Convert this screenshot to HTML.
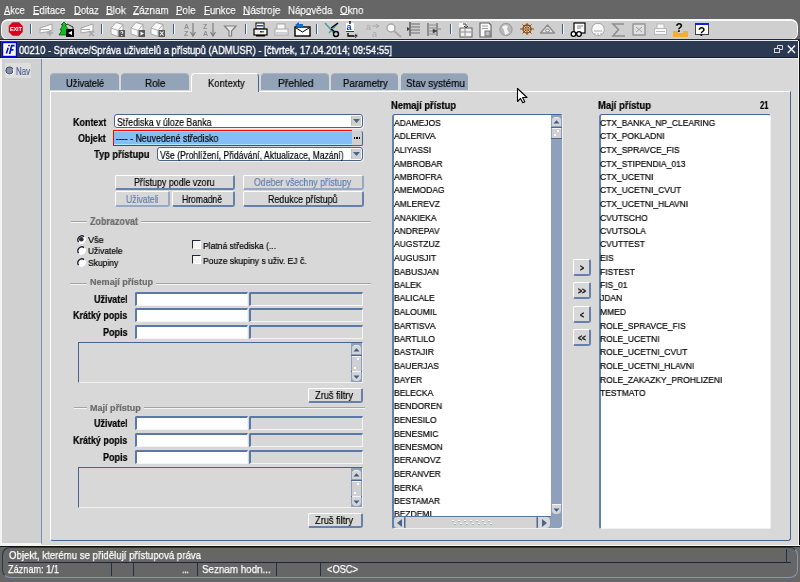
<!DOCTYPE html>
<html><head><meta charset="utf-8"><style>
html,body{margin:0;padding:0;}
body{width:800px;height:582px;overflow:hidden;position:relative;background:#666666;font-family:"Liberation Sans",sans-serif;}
.b{position:absolute;}
.t{position:absolute;white-space:pre;transform-origin:0 0;will-change:transform;-webkit-text-stroke:0.2px currentColor;}
</style></head><body>
<div class="t" style="left:4.00px;top:5px;font-size:11px;line-height:11px;color:#ffffff;transform:scaleX(0.8506);-webkit-text-stroke:0.25px #fff;text-shadow:0 0 1px #202020;">Akce</div>
<div class="b" style="left:4px;top:14px;width:6px;height:1px;background:#ffffff"></div>
<div class="t" style="left:33.00px;top:5px;font-size:11px;line-height:11px;color:#ffffff;transform:scaleX(0.8804);-webkit-text-stroke:0.25px #fff;text-shadow:0 0 1px #202020;">Editace</div>
<div class="b" style="left:33px;top:14px;width:6px;height:1px;background:#ffffff"></div>
<div class="t" style="left:74.00px;top:5px;font-size:11px;line-height:11px;color:#ffffff;transform:scaleX(0.8630);-webkit-text-stroke:0.25px #fff;text-shadow:0 0 1px #202020;">Dotaz</div>
<div class="b" style="left:74px;top:14px;width:7px;height:1px;background:#ffffff"></div>
<div class="t" style="left:106.00px;top:5px;font-size:11px;line-height:11px;color:#ffffff;transform:scaleX(0.9253);-webkit-text-stroke:0.25px #fff;text-shadow:0 0 1px #202020;">Blok</div>
<div class="b" style="left:106px;top:14px;width:7px;height:1px;background:#ffffff"></div>
<div class="t" style="left:133.00px;top:5px;font-size:11px;line-height:11px;color:#ffffff;transform:scaleX(0.9010);-webkit-text-stroke:0.25px #fff;text-shadow:0 0 1px #202020;">Záznam</div>
<div class="b" style="left:133px;top:14px;width:6px;height:1px;background:#ffffff"></div>
<div class="t" style="left:176.00px;top:5px;font-size:11px;line-height:11px;color:#ffffff;transform:scaleX(0.8857);-webkit-text-stroke:0.25px #fff;text-shadow:0 0 1px #202020;">Pole</div>
<div class="b" style="left:176px;top:14px;width:6px;height:1px;background:#ffffff"></div>
<div class="t" style="left:203.80px;top:5px;font-size:11px;line-height:11px;color:#ffffff;transform:scaleX(0.8760);-webkit-text-stroke:0.25px #fff;text-shadow:0 0 1px #202020;">Funkce</div>
<div class="b" style="left:204px;top:14px;width:6px;height:1px;background:#ffffff"></div>
<div class="t" style="left:243.00px;top:5px;font-size:11px;line-height:11px;color:#ffffff;transform:scaleX(0.9155);-webkit-text-stroke:0.25px #fff;text-shadow:0 0 1px #202020;">Nástroje</div>
<div class="b" style="left:243px;top:14px;width:7px;height:1px;background:#ffffff"></div>
<div class="t" style="left:288.40px;top:5px;font-size:11px;line-height:11px;color:#ffffff;transform:scaleX(0.8853);-webkit-text-stroke:0.25px #fff;text-shadow:0 0 1px #202020;">Nápověda</div>
<div class="b" style="left:306px;top:14px;width:5px;height:1px;background:#ffffff"></div>
<div class="t" style="left:340.30px;top:5px;font-size:11px;line-height:11px;color:#ffffff;transform:scaleX(0.8938);-webkit-text-stroke:0.25px #fff;text-shadow:0 0 1px #202020;">Okno</div>
<div class="b" style="left:340px;top:14px;width:8px;height:1px;background:#ffffff"></div>
<div class="b" style="left:1px;top:19px;width:797px;height:21px;background:#cfcfcf;border:1px solid #f8f8f8;border-top-width:2px;border-radius:7px;box-sizing:border-box"></div>
<div class="b" style="left:0px;top:39px;width:800px;height:2px;background:#1e2838"></div>
<svg class="b" style="left:0;top:0" width="800" height="40" viewBox="0 0 800 40"><polygon points="12.5,22 19,22 23,26 23,32 19,36 12.5,36 8.5,32 8.5,26" fill="#d8001a" stroke="#a0e0e0" stroke-width="0.5"/><text x="15.8" y="31.2" text-anchor="middle" font-family="Liberation Sans" font-size="5.6" font-weight="bold" fill="#fff" letter-spacing="-0.2">EXIT</text><rect x="30" y="24" width="1" height="10" fill="#3a5a90"/><rect x="31" y="24" width="1" height="10" fill="#fafafa"/><rect x="101" y="24" width="1" height="10" fill="#3a5a90"/><rect x="102" y="24" width="1" height="10" fill="#fafafa"/><rect x="173" y="24" width="1" height="10" fill="#3a5a90"/><rect x="174" y="24" width="1" height="10" fill="#fafafa"/><rect x="245" y="24" width="1" height="10" fill="#3a5a90"/><rect x="246" y="24" width="1" height="10" fill="#fafafa"/><rect x="316" y="24" width="1" height="10" fill="#3a5a90"/><rect x="317" y="24" width="1" height="10" fill="#fafafa"/><rect x="450" y="24" width="1" height="10" fill="#3a5a90"/><rect x="451" y="24" width="1" height="10" fill="#fafafa"/><rect x="562" y="24" width="1" height="10" fill="#3a5a90"/><rect x="563" y="24" width="1" height="10" fill="#fafafa"/><path d="M40 28 L52 24 L52 31 L40 33 Z" fill="#f8f8f8" stroke="#a8a8a8" stroke-width="1"/><path d="M40 29.5 H49" stroke="#a8a8a8" stroke-width="1"/><path d="M50 30 V36 M47 33 H53" stroke="#a8a8a8" stroke-width="1.5"/><path d="M81 28 L93 24 L93 31 L81 33 Z" fill="#f8f8f8" stroke="#a8a8a8" stroke-width="1"/><path d="M81 29.5 H90" stroke="#a8a8a8" stroke-width="1"/><path d="M89 31 L94 36 M94 31 L89 36" stroke="#a8a8a8" stroke-width="1.5"/><path d="M64 22 L67 25 L65 25 L69 30 L66 30 L70 35 L59 35 L62 30 L60 30 L63 25 L61 25 Z" fill="#10c020" stroke="#003000" stroke-width="0.6"/><rect x="66" y="29" width="8" height="8" fill="#000"/><path d="M68 33 L72 31 V35 Z" fill="#fff"/><path d="M67 24 L73 27 V29" stroke="#303030" stroke-width="1" fill="none"/><path d="M111 28 L116 22.5 L123 24.5 L123 31 L118 36.5 L111 34 Z" fill="#f8f8f8" stroke="#a8a8a8" stroke-width="1"/><path d="M111 28 L118 30.5 L123 24.5 M118 30.5 V36" stroke="#a8a8a8" stroke-width="0.9" fill="none"/><rect x="118.5" y="30" width="6.5" height="7" fill="#585858"/><path d="M120.5 32 Q121.8 30.8 123 32 Q122.5 33.3 121.8 34" stroke="#fff" stroke-width="1" fill="none"/><rect x="121.3" y="35" width="1" height="1" fill="#fff"/><path d="M131 28 L136 22.5 L143 24.5 L143 31 L138 36.5 L131 34 Z" fill="#f8f8f8" stroke="#a8a8a8" stroke-width="1"/><path d="M131 28 L138 30.5 L143 24.5 M138 30.5 V36" stroke="#a8a8a8" stroke-width="0.9" fill="none"/><rect x="138.5" y="30" width="6.5" height="7" fill="#585858"/><path d="M140.5 31.5 L144 33.5 L140.5 35.5 Z" fill="#fff"/><path d="M151 28 L156 22.5 L163 24.5 L163 31 L158 36.5 L151 34 Z" fill="#f8f8f8" stroke="#a8a8a8" stroke-width="1"/><path d="M151 28 L158 30.5 L163 24.5 M158 30.5 V36" stroke="#a8a8a8" stroke-width="0.9" fill="none"/><rect x="158.5" y="30" width="6.5" height="7" fill="#585858"/><path d="M160 31.5 L163.5 35.5 M163.5 31.5 L160 35.5" stroke="#fff" stroke-width="1.1"/><text x="184" y="28.5" font-family="Liberation Sans" font-size="7" font-weight="bold" fill="#909090">A</text><text x="184" y="36" font-family="Liberation Sans" font-size="7" font-weight="bold" fill="#909090">Z</text><path d="M193 23 V35 M190.5 32 L193 36 L195.5 32" stroke="#808080" stroke-width="1.2" fill="none"/><text x="203" y="28.5" font-family="Liberation Sans" font-size="7" font-weight="bold" fill="#909090">Z</text><text x="203" y="36" font-family="Liberation Sans" font-size="7" font-weight="bold" fill="#909090">A</text><path d="M213 23 V35 M210.5 32 L213 36 L215.5 32" stroke="#808080" stroke-width="1.2" fill="none"/><path d="M224.5 26 H236 L231.5 31 V36 H229 V31 Z" fill="#e8e8e8" stroke="#808080" stroke-width="1.2"/><rect x="256" y="23" width="8" height="6" fill="#fff" stroke="#000" stroke-width="1"/><rect x="257" y="25" width="6" height="1.5" fill="#2040c0"/><rect x="254" y="29" width="13" height="6" fill="#f0f0f0" stroke="#000" stroke-width="1.2"/><rect x="260" y="31" width="2" height="1.5" fill="#e00000"/><rect x="262" y="31" width="2" height="1.5" fill="#00c000"/><rect x="256" y="35" width="9" height="1.5" fill="#000"/><rect x="277" y="24" width="8" height="6" fill="#f8f8f8" stroke="#a8a8a8" stroke-width="1"/><rect x="275" y="29" width="13" height="6" fill="#f8f8f8" stroke="#a8a8a8" stroke-width="1"/><path d="M276 33 H287" stroke="#a8a8a8"/><rect x="295" y="27" width="15" height="9" fill="#fff" stroke="#000" stroke-width="1.4"/><path d="M296 28 L302.5 32 L309 28" stroke="#000" fill="none"/><path d="M295 25 L299 22 L299 24 H303 V27 H299 V28 Z" fill="#0070e0"/><path d="M325 23 L334 33 M338 23 L329 33" stroke="#50a0a0" stroke-width="1.6"/><path d="M331 28 L338 23" stroke="#000" stroke-width="1.4"/><circle cx="336" cy="34" r="2.5" fill="none" stroke="#000" stroke-width="1.4"/><circle cx="333" cy="27" r="0" /><path d="M331 29 L335 32" stroke="#000" stroke-width="1.3"/><rect x="346" y="23" width="8" height="8" fill="#fff"/><text x="346.5" y="30" font-family="Liberation Sans" font-size="9" font-weight="bold" fill="#1030e0">a</text><path d="M346 31.5 H354" stroke="#1030e0"/><path d="M350 21 V24 M348 33 V36 H356" stroke="#000" stroke-width="1.3" fill="none"/><path d="M355 34 L358 36 L355 38 Z" fill="#000"/><text x="354" y="37" font-family="Liberation Sans" font-size="8" fill="#b0b0b0">a</text><text x="366" y="30" font-family="Liberation Sans" font-size="9" fill="#a8a8a8">a</text><path d="M372 26 H379 M376 24 L379 26 L376 28" stroke="#a8a8a8" fill="none"/><text x="372" y="37" font-family="Liberation Sans" font-size="9" fill="#a8a8a8">a</text><circle cx="391" cy="28" r="4" fill="#f8f8f8" stroke="#a8a8a8" stroke-width="1.5"/><path d="M394 31 L401 37" stroke="#a8a8a8" stroke-width="2"/><path d="M410 22 V36" stroke="#404040" stroke-width="1.2"/><path d="M411 24 H420 M411 27 H420 M411 30 H420 M411 33 H420" stroke="#707070" stroke-width="1.1"/><path d="M407 27 L410 29 L407 31 Z" fill="#404040"/><path d="M428 23 V36 M437 23 V36" stroke="#505050" stroke-width="1"/><path d="M429 25 H436 M429 28 H436 M429 31 H436 M429 34 H436" stroke="#909090"/><path d="M433 29 L437 31 L433 33 Z M438 29 H441" fill="#404040" stroke="#404040" stroke-width="0.5"/><rect x="459" y="23" width="8" height="6" fill="#f4f4f4"/><rect x="460" y="28" width="12" height="9" fill="#f0f0f0" stroke="#606060" stroke-width="1"/><path d="M461 32 H471 M465 28 V36" stroke="#909090"/><path d="M463 24 H466 V27 M464 26 L466 28 L468 26" stroke="#404040" fill="none"/><path d="M480 23 H489 L491 25 V37 H480 Z" fill="#f8f8f8" stroke="#606060" stroke-width="1.1"/><path d="M482 26 H488 M482 28.5 H488" stroke="#a0a0a0"/><rect x="485" y="31" width="5" height="5" fill="#c0c0c0" stroke="#606060" stroke-width="0.8"/><circle cx="506" cy="29.5" r="6.2" fill="#b8b8b8" stroke="#909090" stroke-width="0.8"/><path d="M502 27 Q505 24 508 26 L507 29 L509 33 L505 35 L504 30 Z" fill="#f4f4f4"/><circle cx="527" cy="29" r="4" fill="none" stroke="#8a4a10" stroke-width="1.3"/><path d="M520 29 H534 M527 23 V35 M522.5 24.5 L531.5 33.5 M531.5 24.5 L522.5 33.5" stroke="#8a4a10" stroke-width="1"/><circle cx="527" cy="29" r="1.5" fill="#c08040"/><path d="M540.5 33 L547.5 25 L554.5 33 Z" fill="#e4e4e4" stroke="#8c8c8c" stroke-width="1.3" stroke-linejoin="round"/><ellipse cx="547.5" cy="30.5" rx="2" ry="1.5" fill="none" stroke="#8c8c8c"/><rect x="574" y="23" width="11" height="10" fill="#fff" stroke="#000" stroke-width="1.2"/><path d="M577 26 H583 M577 28 H581" stroke="#808080"/><circle cx="573.5" cy="34" r="2.3" fill="#fff" stroke="#000" stroke-width="1.3"/><circle cx="579" cy="34" r="2.3" fill="#fff" stroke="#000" stroke-width="1.3"/><circle cx="598" cy="29.5" r="6.3" fill="#f8f8f8" stroke="#a8a8a8" stroke-width="1"/><path d="M594 31 H602 M595 33 V35 M598 33 V35 M601 33 V35" stroke="#a8a8a8"/><path d="M624 24 H613 L618.5 29.5 L613 36 H625" fill="none" stroke="#909090" stroke-width="1.6"/><rect x="633" y="24" width="12" height="11" fill="#e0e0e0" stroke="#909090" stroke-width="1.3"/><path d="M636 27 L642 32 M642 27 L636 32" stroke="#a0a0a0"/><rect x="657" y="24" width="7" height="5" fill="#f8f8f8" stroke="#b8b8b8"/><rect x="654.5" y="28.5" width="12" height="6" fill="#f8f8f8" stroke="#b8b8b8"/><path d="M656 31.5 H665" stroke="#b8b8b8"/><rect x="673" y="31" width="5" height="6" fill="#f0b030"/><rect x="683" y="31" width="5" height="6" fill="#f0b030"/><rect x="678" y="33" width="5" height="4" fill="#f0b030"/><text x="675.5" y="32" font-family="Liberation Sans" font-size="12" font-weight="bold" fill="#000">?</text><rect x="695.5" y="23.5" width="13" height="11" fill="#fff" stroke="#404040" stroke-width="1"/><rect x="695" y="23" width="14" height="2" fill="#1020e0"/><text x="698" y="36" font-family="Liberation Sans" font-size="12" font-weight="bold" fill="#000">?</text></svg>
<div class="b" style="left:0px;top:41px;width:798px;height:17px;background:#2b3a52"></div>
<div class="b" style="left:0px;top:40px;width:798px;height:1px;background:#e8e8e8"></div>
<div class="b" style="left:0px;top:57px;width:798px;height:1px;background:#141c2a"></div>
<div class="b" style="left:0px;top:41px;width:1px;height:17px;background:#141c2a"></div>
<div class="b" style="left:0px;top:58px;width:800px;height:1px;background:#f0f0f0"></div>
<svg class="b" style="left:2px;top:42px" width="15" height="15" viewBox="0 0 15 15"><rect x="0.6" y="0.6" width="13.8" height="13.8" fill="#fbfbf0" stroke="#0000f0" stroke-width="1.2"/><circle cx="7" cy="3.6" r="0.9" fill="#0010d0"/><path d="M6.2 5.8 L4.4 11.5" stroke="#0010d0" stroke-width="1.6"/><path d="M7.6 12 L9.7 3.6 H12.6 M8.4 7.8 H11.5" stroke="#0010d0" stroke-width="1.7" fill="none"/></svg>
<div class="t" style="left:19.00px;top:45px;font-size:11px;line-height:11px;color:#ffffff;transform:scaleX(0.8604);-webkit-text-stroke:0.35px #fff;">00210 - Správce/Správa uživatelů a přístupů (ADMUSR) - [čtvrtek, 17.04.2014; 09:54:55]</div>
<svg class="b" style="left:0;top:0" width="800" height="60" viewBox="0 0 800 60"><path d="M777.5 48 V45.5 H782.5 V49.5 H779.5" fill="none" stroke="#d8d8d8" stroke-width="1"/><rect x="774.5" y="48.5" width="5" height="4" fill="none" stroke="#d8d8d8" stroke-width="1"/><path d="M787.8 45.5 L795 53 M795 45.5 L787.8 53" stroke="#f4f4f4" stroke-width="1.5"/></svg>
<div class="b" style="left:0px;top:59px;width:800px;height:487px;background:#d8d8d8"></div>
<div class="b" style="left:0px;top:59px;width:2px;height:487px;background:#f4f4f4"></div>
<div class="b" style="left:798px;top:41px;width:1px;height:505px;background:#f0f0f0"></div>
<div class="b" style="left:799px;top:41px;width:1px;height:505px;background:#101010"></div>
<div class="b" style="left:2px;top:59px;width:40px;height:486px;background:#d0d0d0;border-right:1px solid #7890b0;border-bottom:2px solid #f4f4f4;box-sizing:border-box"></div>
<div class="b" style="left:5px;top:63px;width:26px;height:15px;background:#dedede"></div>
<svg class="b" style="left:5px;top:66px" width="9" height="9" viewBox="0 0 9 9"><circle cx="4.5" cy="4.5" r="3.6" fill="#8090a8" stroke="#404a60" stroke-width="1"/><path d="M1.5 7.5 A3.8 3.8 0 0 0 8 3" stroke="#fff" fill="none" stroke-width="1"/></svg>
<div class="t" style="left:16.00px;top:66px;font-size:11px;line-height:11px;color:#4a6090;transform:scaleX(0.7157);">Nav</div>
<div class="b" style="left:0px;top:545px;width:800px;height:1px;background:#f4f4f4"></div>
<div class="b" style="left:0px;top:546px;width:800px;height:1px;background:#101010"></div>
<div class="b" style="left:50px;top:91px;width:741px;height:450px;background:#d8d8d8;border-left:1px solid #ffffff;border-top:1px solid #ffffff;border-right:1px solid #4a6490;border-bottom:1px solid #4a6490;border-radius:0 0 3px 3px;box-sizing:border-box"></div>
<div class="b" style="left:50px;top:73px;width:69px;height:17px;background:#94a4b8;border-radius:4px 4px 0 0;border-top:1px solid #a8b4c4;box-sizing:border-box"></div>
<div class="t" style="left:65.60px;top:78px;font-size:11px;line-height:11px;color:#000;transform:scaleX(0.8444);">Uživatelé</div>
<div class="b" style="left:121px;top:73px;width:68px;height:17px;background:#94a4b8;border-radius:4px 4px 0 0;border-top:1px solid #a8b4c4;box-sizing:border-box"></div>
<div class="t" style="left:145.40px;top:78px;font-size:11px;line-height:11px;color:#000;transform:scaleX(0.9017);">Role</div>
<div class="b" style="left:191px;top:73px;width:68px;height:19px;background:#d8d8d8;border-left:1px solid #fff;border-top:1px solid #fff;border-right:1px solid #4a6490;border-radius:4px 4px 0 0;box-sizing:border-box"></div>
<div class="t" style="left:208.00px;top:78px;font-size:11px;line-height:11px;color:#000;transform:scaleX(0.8598);">Kontexty</div>
<div class="b" style="left:261px;top:73px;width:68px;height:17px;background:#94a4b8;border-radius:4px 4px 0 0;border-top:1px solid #a8b4c4;box-sizing:border-box"></div>
<div class="t" style="left:278.00px;top:78px;font-size:11px;line-height:11px;color:#000;transform:scaleX(0.9363);">Přehled</div>
<div class="b" style="left:331px;top:73px;width:67px;height:17px;background:#94a4b8;border-radius:4px 4px 0 0;border-top:1px solid #a8b4c4;box-sizing:border-box"></div>
<div class="t" style="left:343.00px;top:78px;font-size:11px;line-height:11px;color:#000;transform:scaleX(0.8830);">Parametry</div>
<div class="b" style="left:401px;top:73px;width:67px;height:17px;background:#94a4b8;border-radius:4px 4px 0 0;border-top:1px solid #a8b4c4;box-sizing:border-box"></div>
<div class="t" style="left:406.00px;top:78px;font-size:11px;line-height:11px;color:#000;transform:scaleX(0.8906);">Stav systému</div>
<div class="t" style="left:72.75px;top:117px;font-size:11px;line-height:11px;font-weight:bold;color:#000;transform:scaleX(0.8121);">Kontext</div>
<div class="b" style="left:114px;top:114px;width:249px;height:14px;background:#fff;border:1px solid #4a6490;border-radius:3px;box-shadow:1px 1px 0 #f0f0f0;box-sizing:border-box"></div>
<div class="b" style="left:351px;top:116px;width:10px;height:10px;background:#d0d0d0;border-left:1px solid #c0c0c0;box-sizing:border-box"></div>
<svg class="b" style="left:353px;top:119px" width="7" height="4" viewBox="0 0 7 4"><path d="M0 0H7L3.5 4Z" fill="#4a6490"/></svg>
<div class="t" style="left:117.00px;top:117px;font-size:11px;line-height:11px;color:#000;transform:scaleX(0.8000);">Střediska v úloze Banka</div>
<div class="t" style="left:78.27px;top:133px;font-size:11px;line-height:11px;font-weight:bold;color:#000;transform:scaleX(0.8100);">Objekt</div>
<div class="b" style="left:113px;top:130px;width:239px;height:16px;background:#84bef6;border-top:1px solid #ff0000;border-bottom:1px solid #ff0000;border-left:1px solid #ff0000;box-shadow:inset 0 1px 0 #b0e4ff, inset 0 -1px 0 #b0e4ff;box-sizing:border-box"></div>
<div class="b" style="left:352px;top:131px;width:11px;height:15px;background:#d0d0d0;border-right:1px solid #4a6490;border-bottom:1px solid #4a6490;border-radius:0 2px 2px 0;box-sizing:border-box"></div>
<div class="b" style="left:354px;top:137px;width:1px;height:2px;background:#000"></div>
<div class="b" style="left:356px;top:137px;width:2px;height:2px;background:#000"></div>
<div class="b" style="left:359px;top:137px;width:1px;height:2px;background:#000"></div>
<div class="t" style="left:116.00px;top:133px;font-size:11px;line-height:11px;color:#000;transform:scaleX(0.8000);">---- - Neuvedené středisko</div>
<div class="t" style="left:94.00px;top:149px;font-size:11px;line-height:11px;font-weight:bold;color:#000;transform:scaleX(0.8436);">Typ přístupu</div>
<div class="b" style="left:157px;top:147px;width:206px;height:14px;background:#fff;border:1px solid #4a6490;border-radius:3px;box-shadow:1px 1px 0 #f0f0f0;box-sizing:border-box"></div>
<div class="b" style="left:351px;top:149px;width:10px;height:10px;background:#d0d0d0;border-left:1px solid #c0c0c0;box-sizing:border-box"></div>
<svg class="b" style="left:353px;top:152px" width="7" height="4" viewBox="0 0 7 4"><path d="M0 0H7L3.5 4Z" fill="#4a6490"/></svg>
<div class="t" style="left:160.00px;top:150px;font-size:11px;line-height:11px;color:#000;transform:scaleX(0.7800);">Vše (Prohlížení, Přidávání, Aktualizace, Mazání)</div>
<div class="b" style="left:115px;top:175px;width:120px;height:15px;background:#d8d8d8;border-top:1px solid #ffffff;border-left:1px solid #ffffff;border-right:2px solid #6680aa;border-bottom:2px solid #6680aa;border-radius:2px 2px 3px 2px;box-sizing:border-box"></div>
<div class="t" style="left:133.75px;top:177px;font-size:11px;line-height:11px;color:#000;transform:scaleX(0.8028);">Přístupy podle vzoru</div>
<div class="b" style="left:243px;top:175px;width:121px;height:15px;background:#d8d8d8;border-top:1px solid #ffffff;border-left:1px solid #ffffff;border-right:2px solid #98a8c4;border-bottom:2px solid #98a8c4;border-radius:2px 2px 3px 2px;box-sizing:border-box"></div>
<div class="t" style="left:253.90px;top:177px;font-size:11px;line-height:11px;color:#6080b0;transform:scaleX(0.7949);">Odeber všechny přístupy</div>
<div class="b" style="left:115px;top:191px;width:55px;height:16px;background:#d8d8d8;border-top:1px solid #ffffff;border-left:1px solid #ffffff;border-right:2px solid #98a8c4;border-bottom:2px solid #98a8c4;border-radius:2px 2px 3px 2px;box-sizing:border-box"></div>
<div class="t" style="left:125.75px;top:194px;font-size:11px;line-height:11px;color:#6080b0;transform:scaleX(0.7819);">Uživateli</div>
<div class="b" style="left:172px;top:191px;width:63px;height:16px;background:#d8d8d8;border-top:1px solid #ffffff;border-left:1px solid #ffffff;border-right:2px solid #6680aa;border-bottom:2px solid #6680aa;border-radius:2px 2px 3px 2px;box-sizing:border-box"></div>
<div class="t" style="left:182.00px;top:194px;font-size:11px;line-height:11px;color:#000;transform:scaleX(0.7788);">Hromadně</div>
<div class="b" style="left:243px;top:191px;width:121px;height:16px;background:#d8d8d8;border-top:1px solid #ffffff;border-left:1px solid #ffffff;border-right:2px solid #6680aa;border-bottom:2px solid #6680aa;border-radius:2px 2px 3px 2px;box-sizing:border-box"></div>
<div class="t" style="left:267.75px;top:194px;font-size:11px;line-height:11px;color:#000;transform:scaleX(0.8061);">Redukce přístupů</div>
<div class="b" style="left:71px;top:221px;width:16.400000000000006px;height:1px;background:#a4a4a4"></div>
<div class="b" style="left:141.3px;top:221px;width:229.7px;height:1px;background:#a4a4a4"></div>
<div class="b" style="left:71px;top:222px;width:16.400000000000006px;height:1px;background:#f4f4f4"></div>
<div class="b" style="left:141.3px;top:222px;width:229.7px;height:1px;background:#f4f4f4"></div>
<div class="t" style="left:90.40px;top:217px;font-size:10px;line-height:10px;font-weight:bold;color:#6c6c6c;transform:scaleX(0.8980);">Zobrazovat</div>
<svg class="b" style="left:76px;top:234px" width="11" height="11" viewBox="0 0 11 11"><circle cx="5.5" cy="5.5" r="4" fill="#fafafa"/><path d="M2.7 8.3A4 4 0 0 1 8.3 2.7" stroke="#1c2230" stroke-width="1.3" fill="none"/><path d="M8.3 2.7A4 4 0 0 1 2.7 8.3" stroke="#ffffff" stroke-width="1.2" fill="none"/><circle cx="5.3" cy="5.3" r="2.3" fill="#283040"/></svg>
<div class="t" style="left:88.00px;top:235px;font-size:9.5px;line-height:9.5px;color:#000;transform:scaleX(0.9591);">Vše</div>
<svg class="b" style="left:76px;top:245px" width="11" height="11" viewBox="0 0 11 11"><circle cx="5.5" cy="5.5" r="4" fill="#fafafa"/><path d="M2.7 8.3A4 4 0 0 1 8.3 2.7" stroke="#1c2230" stroke-width="1.3" fill="none"/><path d="M8.3 2.7A4 4 0 0 1 2.7 8.3" stroke="#ffffff" stroke-width="1.2" fill="none"/></svg>
<div class="t" style="left:88.00px;top:246px;font-size:9.5px;line-height:9.5px;color:#000;transform:scaleX(0.8830);">Uživatele</div>
<svg class="b" style="left:76px;top:257px" width="11" height="11" viewBox="0 0 11 11"><circle cx="5.5" cy="5.5" r="4" fill="#fafafa"/><path d="M2.7 8.3A4 4 0 0 1 8.3 2.7" stroke="#1c2230" stroke-width="1.3" fill="none"/><path d="M8.3 2.7A4 4 0 0 1 2.7 8.3" stroke="#ffffff" stroke-width="1.2" fill="none"/></svg>
<div class="t" style="left:88.00px;top:258px;font-size:9.5px;line-height:9.5px;color:#000;transform:scaleX(0.8965);">Skupiny</div>
<div class="b" style="left:192px;top:240px;width:9px;height:9px;background:#f4f4f4;border-top:1px solid #202838;border-left:1px solid #202838;border-right:1px solid #ffffff;border-bottom:1px solid #ffffff;box-sizing:border-box"></div>
<div class="t" style="left:203.00px;top:241px;font-size:9.5px;line-height:9.5px;color:#000;transform:scaleX(0.8978);">Platná střediska (...</div>
<div class="b" style="left:192px;top:255px;width:9px;height:9px;background:#f4f4f4;border-top:1px solid #202838;border-left:1px solid #202838;border-right:1px solid #ffffff;border-bottom:1px solid #ffffff;box-sizing:border-box"></div>
<div class="t" style="left:203.00px;top:256px;font-size:9.5px;line-height:9.5px;color:#000;transform:scaleX(0.9065);">Pouze skupiny s uživ. EJ č.</div>
<div class="b" style="left:70px;top:283px;width:17.400000000000006px;height:1px;background:#a4a4a4"></div>
<div class="b" style="left:156.4px;top:283px;width:214.6px;height:1px;background:#a4a4a4"></div>
<div class="b" style="left:70px;top:284px;width:17.400000000000006px;height:1px;background:#f4f4f4"></div>
<div class="b" style="left:156.4px;top:284px;width:214.6px;height:1px;background:#f4f4f4"></div>
<div class="t" style="left:90.40px;top:278px;font-size:9px;line-height:9px;font-weight:bold;color:#6c6c6c;transform:scaleX(1.0078);">Nemají přístup</div>
<div class="t" style="left:93.90px;top:294px;font-size:11px;line-height:11px;font-weight:bold;color:#000;transform:scaleX(0.8082);">Uživatel</div>
<div class="b" style="left:135px;top:292px;width:113px;height:14px;background:#ffffff;border-top:2px solid #5a78a8;border-left:2px solid #5a78a8;border-radius:2px 0 0 0;border-right:1px solid #f4f4f4;border-bottom:1px solid #f4f4f4;box-sizing:border-box"></div>
<div class="b" style="left:249px;top:292px;width:114px;height:14px;background:#d8d8d8;border-top:2px solid #5a78a8;border-left:2px solid #5a78a8;border-radius:2px 0 0 0;border-right:1px solid #f4f4f4;border-bottom:1px solid #f4f4f4;box-sizing:border-box"></div>
<div class="t" style="left:73.30px;top:310px;font-size:11px;line-height:11px;font-weight:bold;color:#000;transform:scaleX(0.8135);">Krátký popis</div>
<div class="b" style="left:135px;top:308px;width:113px;height:14px;background:#ffffff;border-top:2px solid #5a78a8;border-left:2px solid #5a78a8;border-radius:2px 0 0 0;border-right:1px solid #f4f4f4;border-bottom:1px solid #f4f4f4;box-sizing:border-box"></div>
<div class="b" style="left:249px;top:308px;width:114px;height:14px;background:#d8d8d8;border-top:2px solid #5a78a8;border-left:2px solid #5a78a8;border-radius:2px 0 0 0;border-right:1px solid #f4f4f4;border-bottom:1px solid #f4f4f4;box-sizing:border-box"></div>
<div class="t" style="left:102.90px;top:327px;font-size:11px;line-height:11px;font-weight:bold;color:#000;transform:scaleX(0.8214);">Popis</div>
<div class="b" style="left:135px;top:325px;width:113px;height:14px;background:#ffffff;border-top:2px solid #5a78a8;border-left:2px solid #5a78a8;border-radius:2px 0 0 0;border-right:1px solid #f4f4f4;border-bottom:1px solid #f4f4f4;box-sizing:border-box"></div>
<div class="b" style="left:249px;top:325px;width:114px;height:14px;background:#d8d8d8;border-top:2px solid #5a78a8;border-left:2px solid #5a78a8;border-radius:2px 0 0 0;border-right:1px solid #f4f4f4;border-bottom:1px solid #f4f4f4;box-sizing:border-box"></div>
<div class="b" style="left:78px;top:342px;width:285px;height:41px;background:#d8d8d8;border-top:1px solid #4a6490;border-left:1px solid #4a6490;border-right:1px solid #f0f0f0;border-bottom:1px solid #f0f0f0;box-sizing:border-box"></div>
<div class="b" style="left:351px;top:343px;width:11px;height:39px;background:#8fa0bc"></div>
<div class="b" style="left:352px;top:345px;width:9px;height:9px;background:#d4d4d4;border-radius:4px 4px 0 0;border-top:1px solid #eeeeee;box-sizing:border-box"></div>
<svg class="b" style="left:353px;top:348px" width="7" height="4" viewBox="0 0 7 4"><path d="M0.5 3.5H6.5L3.5 0.3Z" fill="#3c5a8c"/></svg>
<div class="b" style="left:351px;top:355px;width:11px;height:1px;background:#4a6898"></div>
<div class="b" style="left:352px;top:356px;width:9px;height:1px;background:#f4f4f4"></div>
<div class="b" style="left:352px;top:357px;width:9px;height:14px;background:#d0d0d0"></div>
<div class="b" style="left:357px;top:358px;width:2px;height:2px;background:#ffffff"></div>
<div class="b" style="left:354px;top:367px;width:2px;height:2px;background:#ffffff"></div>
<div class="b" style="left:351px;top:371px;width:11px;height:1px;background:#4a6898"></div>
<div class="b" style="left:352px;top:371px;width:9px;height:10px;background:#d4d4d4;border-radius:0 0 4px 4px;border-top:1px solid #f4f4f4;box-sizing:border-box"></div>
<svg class="b" style="left:353px;top:375px" width="7" height="4" viewBox="0 0 7 4"><path d="M0.5 0.5H6.5L3.5 3.7Z" fill="#3c5a8c"/></svg>
<div class="b" style="left:308px;top:388px;width:55px;height:15px;background:#d8d8d8;border-top:1px solid #ffffff;border-left:1px solid #ffffff;border-right:2px solid #6680aa;border-bottom:2px solid #6680aa;border-radius:2px 2px 3px 2px;box-sizing:border-box"></div>
<div class="t" style="left:315.00px;top:390px;font-size:11px;line-height:11px;color:#000;transform:scaleX(0.8404);">Zruš filtry</div>
<div class="b" style="left:74px;top:407px;width:13.200000000000003px;height:1px;background:#a4a4a4"></div>
<div class="b" style="left:144px;top:407px;width:221px;height:1px;background:#a4a4a4"></div>
<div class="b" style="left:74px;top:408px;width:13.200000000000003px;height:1px;background:#f4f4f4"></div>
<div class="b" style="left:144px;top:408px;width:221px;height:1px;background:#f4f4f4"></div>
<div class="t" style="left:90.20px;top:404px;font-size:9px;line-height:9px;font-weight:bold;color:#6c6c6c;transform:scaleX(1.0059);">Mají přístup</div>
<div class="t" style="left:93.90px;top:418px;font-size:11px;line-height:11px;font-weight:bold;color:#000;transform:scaleX(0.8082);">Uživatel</div>
<div class="b" style="left:135px;top:416px;width:113px;height:14px;background:#ffffff;border-top:2px solid #5a78a8;border-left:2px solid #5a78a8;border-radius:2px 0 0 0;border-right:1px solid #f4f4f4;border-bottom:1px solid #f4f4f4;box-sizing:border-box"></div>
<div class="b" style="left:249px;top:416px;width:114px;height:14px;background:#d8d8d8;border-top:2px solid #5a78a8;border-left:2px solid #5a78a8;border-radius:2px 0 0 0;border-right:1px solid #f4f4f4;border-bottom:1px solid #f4f4f4;box-sizing:border-box"></div>
<div class="t" style="left:73.30px;top:435px;font-size:11px;line-height:11px;font-weight:bold;color:#000;transform:scaleX(0.8135);">Krátký popis</div>
<div class="b" style="left:135px;top:433px;width:113px;height:14px;background:#ffffff;border-top:2px solid #5a78a8;border-left:2px solid #5a78a8;border-radius:2px 0 0 0;border-right:1px solid #f4f4f4;border-bottom:1px solid #f4f4f4;box-sizing:border-box"></div>
<div class="b" style="left:249px;top:433px;width:114px;height:14px;background:#d8d8d8;border-top:2px solid #5a78a8;border-left:2px solid #5a78a8;border-radius:2px 0 0 0;border-right:1px solid #f4f4f4;border-bottom:1px solid #f4f4f4;box-sizing:border-box"></div>
<div class="t" style="left:102.90px;top:452px;font-size:11px;line-height:11px;font-weight:bold;color:#000;transform:scaleX(0.8214);">Popis</div>
<div class="b" style="left:135px;top:450px;width:113px;height:14px;background:#ffffff;border-top:2px solid #5a78a8;border-left:2px solid #5a78a8;border-radius:2px 0 0 0;border-right:1px solid #f4f4f4;border-bottom:1px solid #f4f4f4;box-sizing:border-box"></div>
<div class="b" style="left:249px;top:450px;width:114px;height:14px;background:#d8d8d8;border-top:2px solid #5a78a8;border-left:2px solid #5a78a8;border-radius:2px 0 0 0;border-right:1px solid #f4f4f4;border-bottom:1px solid #f4f4f4;box-sizing:border-box"></div>
<div class="b" style="left:78px;top:467px;width:285px;height:41px;background:#d8d8d8;border-top:1px solid #4a6490;border-left:1px solid #4a6490;border-right:1px solid #f0f0f0;border-bottom:1px solid #f0f0f0;box-sizing:border-box"></div>
<div class="b" style="left:351px;top:468px;width:11px;height:39px;background:#8fa0bc"></div>
<div class="b" style="left:352px;top:470px;width:9px;height:9px;background:#d4d4d4;border-radius:4px 4px 0 0;border-top:1px solid #eeeeee;box-sizing:border-box"></div>
<svg class="b" style="left:353px;top:473px" width="7" height="4" viewBox="0 0 7 4"><path d="M0.5 3.5H6.5L3.5 0.3Z" fill="#3c5a8c"/></svg>
<div class="b" style="left:351px;top:480px;width:11px;height:1px;background:#4a6898"></div>
<div class="b" style="left:352px;top:481px;width:9px;height:1px;background:#f4f4f4"></div>
<div class="b" style="left:352px;top:482px;width:9px;height:14px;background:#d0d0d0"></div>
<div class="b" style="left:357px;top:483px;width:2px;height:2px;background:#ffffff"></div>
<div class="b" style="left:354px;top:492px;width:2px;height:2px;background:#ffffff"></div>
<div class="b" style="left:351px;top:496px;width:11px;height:1px;background:#4a6898"></div>
<div class="b" style="left:352px;top:496px;width:9px;height:10px;background:#d4d4d4;border-radius:0 0 4px 4px;border-top:1px solid #f4f4f4;box-sizing:border-box"></div>
<svg class="b" style="left:353px;top:500px" width="7" height="4" viewBox="0 0 7 4"><path d="M0.5 0.5H6.5L3.5 3.7Z" fill="#3c5a8c"/></svg>
<div class="b" style="left:308px;top:513px;width:55px;height:15px;background:#d8d8d8;border-top:1px solid #ffffff;border-left:1px solid #ffffff;border-right:2px solid #6680aa;border-bottom:2px solid #6680aa;border-radius:2px 2px 3px 2px;box-sizing:border-box"></div>
<div class="t" style="left:315.00px;top:515px;font-size:11px;line-height:11px;color:#000;transform:scaleX(0.8404);">Zruš filtry</div>
<div class="t" style="left:391.00px;top:100px;font-size:11px;line-height:11px;font-weight:bold;color:#000;transform:scaleX(0.8507);">Nemají přístup</div>
<div class="t" style="left:598.00px;top:100px;font-size:11px;line-height:11px;font-weight:bold;color:#000;transform:scaleX(0.8587);">Mají přístup</div>
<div class="t" style="left:760.00px;top:100px;font-size:11px;line-height:11px;font-weight:bold;color:#000;transform:scaleX(0.6947);">21</div>
<div class="b" style="left:392px;top:114px;width:171px;height:415px;background:#ffffff;border-top:1px solid #48669a;border-left:2px solid #6482ae;border-right:1px solid #f0f0f0;border-bottom:1px solid #f0f0f0;border-radius:3px 3px 2px 2px;box-sizing:border-box"></div>
<div class="b" style="left:394px;top:116px;width:157px;height:400px;overflow:hidden">
<div class="t" style="left:0px;top:3px;font-size:9px;line-height:9px;color:#000;transform:scaleX(0.945)">ADAMEJOS</div>
<div class="t" style="left:0px;top:16px;font-size:9px;line-height:9px;color:#000;transform:scaleX(0.945)">ADLERIVA</div>
<div class="t" style="left:0px;top:30px;font-size:9px;line-height:9px;color:#000;transform:scaleX(0.945)">ALIYASSI</div>
<div class="t" style="left:0px;top:44px;font-size:9px;line-height:9px;color:#000;transform:scaleX(0.945)">AMBROBAR</div>
<div class="t" style="left:0px;top:57px;font-size:9px;line-height:9px;color:#000;transform:scaleX(0.945)">AMBROFRA</div>
<div class="t" style="left:0px;top:70px;font-size:9px;line-height:9px;color:#000;transform:scaleX(0.945)">AMEMODAG</div>
<div class="t" style="left:0px;top:84px;font-size:9px;line-height:9px;color:#000;transform:scaleX(0.945)">AMLEREVZ</div>
<div class="t" style="left:0px;top:98px;font-size:9px;line-height:9px;color:#000;transform:scaleX(0.945)">ANAKIEKA</div>
<div class="t" style="left:0px;top:111px;font-size:9px;line-height:9px;color:#000;transform:scaleX(0.945)">ANDREPAV</div>
<div class="t" style="left:0px;top:124px;font-size:9px;line-height:9px;color:#000;transform:scaleX(0.945)">AUGSTZUZ</div>
<div class="t" style="left:0px;top:138px;font-size:9px;line-height:9px;color:#000;transform:scaleX(0.945)">AUGUSJIT</div>
<div class="t" style="left:0px;top:152px;font-size:9px;line-height:9px;color:#000;transform:scaleX(0.945)">BABUSJAN</div>
<div class="t" style="left:0px;top:165px;font-size:9px;line-height:9px;color:#000;transform:scaleX(0.945)">BALEK</div>
<div class="t" style="left:0px;top:178px;font-size:9px;line-height:9px;color:#000;transform:scaleX(0.945)">BALICALE</div>
<div class="t" style="left:0px;top:192px;font-size:9px;line-height:9px;color:#000;transform:scaleX(0.945)">BALOUMIL</div>
<div class="t" style="left:0px;top:206px;font-size:9px;line-height:9px;color:#000;transform:scaleX(0.945)">BARTISVA</div>
<div class="t" style="left:0px;top:219px;font-size:9px;line-height:9px;color:#000;transform:scaleX(0.945)">BARTLILO</div>
<div class="t" style="left:0px;top:232px;font-size:9px;line-height:9px;color:#000;transform:scaleX(0.945)">BASTAJIR</div>
<div class="t" style="left:0px;top:246px;font-size:9px;line-height:9px;color:#000;transform:scaleX(0.945)">BAUERJAS</div>
<div class="t" style="left:0px;top:260px;font-size:9px;line-height:9px;color:#000;transform:scaleX(0.945)">BAYER</div>
<div class="t" style="left:0px;top:273px;font-size:9px;line-height:9px;color:#000;transform:scaleX(0.945)">BELECKA</div>
<div class="t" style="left:0px;top:286px;font-size:9px;line-height:9px;color:#000;transform:scaleX(0.945)">BENDOREN</div>
<div class="t" style="left:0px;top:300px;font-size:9px;line-height:9px;color:#000;transform:scaleX(0.945)">BENESILO</div>
<div class="t" style="left:0px;top:314px;font-size:9px;line-height:9px;color:#000;transform:scaleX(0.945)">BENESMIC</div>
<div class="t" style="left:0px;top:327px;font-size:9px;line-height:9px;color:#000;transform:scaleX(0.945)">BENESMON</div>
<div class="t" style="left:0px;top:340px;font-size:9px;line-height:9px;color:#000;transform:scaleX(0.945)">BERANOVZ</div>
<div class="t" style="left:0px;top:354px;font-size:9px;line-height:9px;color:#000;transform:scaleX(0.945)">BERANVER</div>
<div class="t" style="left:0px;top:368px;font-size:9px;line-height:9px;color:#000;transform:scaleX(0.945)">BERKA</div>
<div class="t" style="left:0px;top:381px;font-size:9px;line-height:9px;color:#000;transform:scaleX(0.945)">BESTAMAR</div>
<div class="t" style="left:0px;top:394px;font-size:9px;line-height:9px;color:#000;transform:scaleX(0.945)">BEZDEMI</div>
</div>
<div class="b" style="left:551px;top:115px;width:11px;height:402px;background:#8fa0bc"></div>
<div class="b" style="left:552px;top:117px;width:9px;height:9px;background:#d4d4d4;border-radius:4px 4px 0 0;border-top:1px solid #eeeeee;box-sizing:border-box"></div>
<svg class="b" style="left:553px;top:120px" width="7" height="4" viewBox="0 0 7 4"><path d="M0.5 3.5H6.5L3.5 0.3Z" fill="#3c5a8c"/></svg>
<div class="b" style="left:551px;top:127px;width:11px;height:1px;background:#4a6898"></div>
<div class="b" style="left:552px;top:128px;width:9px;height:1px;background:#f4f4f4"></div>
<div class="b" style="left:552px;top:129px;width:9px;height:9px;background:#d0d0d0"></div>
<div class="b" style="left:557px;top:130px;width:2px;height:2px;background:#ffffff"></div>
<div class="b" style="left:554px;top:134px;width:2px;height:2px;background:#ffffff"></div>
<div class="b" style="left:551px;top:138px;width:11px;height:1px;background:#4a6898"></div>
<div class="b" style="left:552px;top:504px;width:9px;height:10px;background:#d4d4d4;border-radius:0 0 4px 4px;border-top:1px solid #f4f4f4;box-sizing:border-box"></div>
<svg class="b" style="left:553px;top:508px" width="7" height="4" viewBox="0 0 7 4"><path d="M0.5 0.5H6.5L3.5 3.7Z" fill="#3c5a8c"/></svg>
<div class="b" style="left:551px;top:516px;width:11px;height:12px;background:#8fa0bc;border-radius:0 0 3px 0"></div>
<div class="b" style="left:394px;top:517px;width:157px;height:11px;background:#8fa0bc"></div>
<div class="b" style="left:394px;top:517px;width:11px;height:11px;background:#d8d8d8;border-radius:4px 1px 1px 4px;border-right:1px solid #506890;box-sizing:border-box"></div>
<svg class="b" style="left:397px;top:519px" width="5" height="8" viewBox="0 0 5 8"><path d="M5 0V8L0 4Z" fill="#4a6490"/></svg>
<div class="b" style="left:406px;top:517px;width:130px;height:11px;background:#d4d4d4;box-sizing:border-box"></div>
<div class="b" style="left:394px;top:516px;width:157px;height:1px;background:#5a74a0"></div>
<div class="b" style="left:452px;top:520px;width:2px;height:1px;background:#fafafa"></div>
<div class="b" style="left:454px;top:523px;width:2px;height:1px;background:#fafafa"></div>
<div class="b" style="left:452px;top:521px;width:2px;height:1px;background:#a8b0c0"></div>
<div class="b" style="left:454px;top:524px;width:2px;height:1px;background:#a8b0c0"></div>
<div class="b" style="left:458px;top:520px;width:2px;height:1px;background:#fafafa"></div>
<div class="b" style="left:460px;top:523px;width:2px;height:1px;background:#fafafa"></div>
<div class="b" style="left:458px;top:521px;width:2px;height:1px;background:#a8b0c0"></div>
<div class="b" style="left:460px;top:524px;width:2px;height:1px;background:#a8b0c0"></div>
<div class="b" style="left:464px;top:520px;width:2px;height:1px;background:#fafafa"></div>
<div class="b" style="left:466px;top:523px;width:2px;height:1px;background:#fafafa"></div>
<div class="b" style="left:464px;top:521px;width:2px;height:1px;background:#a8b0c0"></div>
<div class="b" style="left:466px;top:524px;width:2px;height:1px;background:#a8b0c0"></div>
<div class="b" style="left:470px;top:520px;width:2px;height:1px;background:#fafafa"></div>
<div class="b" style="left:472px;top:523px;width:2px;height:1px;background:#fafafa"></div>
<div class="b" style="left:470px;top:521px;width:2px;height:1px;background:#a8b0c0"></div>
<div class="b" style="left:472px;top:524px;width:2px;height:1px;background:#a8b0c0"></div>
<div class="b" style="left:476px;top:520px;width:2px;height:1px;background:#fafafa"></div>
<div class="b" style="left:478px;top:523px;width:2px;height:1px;background:#fafafa"></div>
<div class="b" style="left:476px;top:521px;width:2px;height:1px;background:#a8b0c0"></div>
<div class="b" style="left:478px;top:524px;width:2px;height:1px;background:#a8b0c0"></div>
<div class="b" style="left:482px;top:520px;width:2px;height:1px;background:#fafafa"></div>
<div class="b" style="left:484px;top:523px;width:2px;height:1px;background:#fafafa"></div>
<div class="b" style="left:482px;top:521px;width:2px;height:1px;background:#a8b0c0"></div>
<div class="b" style="left:484px;top:524px;width:2px;height:1px;background:#a8b0c0"></div>
<div class="b" style="left:488px;top:520px;width:2px;height:1px;background:#fafafa"></div>
<div class="b" style="left:490px;top:523px;width:2px;height:1px;background:#fafafa"></div>
<div class="b" style="left:488px;top:521px;width:2px;height:1px;background:#a8b0c0"></div>
<div class="b" style="left:490px;top:524px;width:2px;height:1px;background:#a8b0c0"></div>
<div class="b" style="left:537px;top:517px;width:13px;height:11px;background:#d8d8d8;border-radius:1px 4px 4px 1px;border-left:1px solid #506890;box-sizing:border-box"></div>
<svg class="b" style="left:542px;top:519px" width="5" height="8" viewBox="0 0 5 8"><path d="M0 0V8L5 4Z" fill="#4a6490"/></svg>
<div class="b" style="left:573px;top:259px;width:18px;height:17px;background:#d8d8d8;border-top:1px solid #fff;border-left:1px solid #fff;border-right:2px solid #6680aa;border-bottom:2px solid #6680aa;border-radius:2px 2px 3px 2px;box-sizing:border-box"></div>
<div class="t" style="left:579.53px;top:264px;font-size:9px;line-height:9px;font-weight:bold;color:#000;transform:scaleX(0.7500);">&gt;</div>
<div class="b" style="left:573px;top:282px;width:18px;height:17px;background:#d8d8d8;border-top:1px solid #fff;border-left:1px solid #fff;border-right:2px solid #6680aa;border-bottom:2px solid #6680aa;border-radius:2px 2px 3px 2px;box-sizing:border-box"></div>
<div class="t" style="left:577.56px;top:287px;font-size:9px;line-height:9px;font-weight:bold;color:#000;transform:scaleX(0.7500);">&gt;&gt;</div>
<div class="b" style="left:573px;top:306px;width:18px;height:17px;background:#d8d8d8;border-top:1px solid #fff;border-left:1px solid #fff;border-right:2px solid #6680aa;border-bottom:2px solid #6680aa;border-radius:2px 2px 3px 2px;box-sizing:border-box"></div>
<div class="t" style="left:579.53px;top:311px;font-size:9px;line-height:9px;font-weight:bold;color:#000;transform:scaleX(0.7500);">&lt;</div>
<div class="b" style="left:573px;top:329px;width:18px;height:17px;background:#d8d8d8;border-top:1px solid #fff;border-left:1px solid #fff;border-right:2px solid #6680aa;border-bottom:2px solid #6680aa;border-radius:2px 2px 3px 2px;box-sizing:border-box"></div>
<div class="t" style="left:577.56px;top:334px;font-size:9px;line-height:9px;font-weight:bold;color:#000;transform:scaleX(0.7500);">&lt;&lt;</div>
<div class="b" style="left:599px;top:114px;width:172px;height:415px;background:#ffffff;border-top:1px solid #48669a;border-left:2px solid #6482ae;border-right:1px solid #f0f0f0;border-bottom:1px solid #f0f0f0;border-radius:3px 3px 2px 2px;box-sizing:border-box"></div>
<div class="t" style="left:600.00px;top:119px;font-size:9px;line-height:9px;color:#000;transform:scaleX(0.9450);">CTX_BANKA_NP_CLEARING</div>
<div class="t" style="left:600.00px;top:132px;font-size:9px;line-height:9px;color:#000;transform:scaleX(0.9450);">CTX_POKLADNI</div>
<div class="t" style="left:600.00px;top:146px;font-size:9px;line-height:9px;color:#000;transform:scaleX(0.9450);">CTX_SPRAVCE_FIS</div>
<div class="t" style="left:600.00px;top:160px;font-size:9px;line-height:9px;color:#000;transform:scaleX(0.9450);">CTX_STIPENDIA_013</div>
<div class="t" style="left:600.00px;top:173px;font-size:9px;line-height:9px;color:#000;transform:scaleX(0.9450);">CTX_UCETNI</div>
<div class="t" style="left:600.00px;top:186px;font-size:9px;line-height:9px;color:#000;transform:scaleX(0.9450);">CTX_UCETNI_CVUT</div>
<div class="t" style="left:600.00px;top:200px;font-size:9px;line-height:9px;color:#000;transform:scaleX(0.9450);">CTX_UCETNI_HLAVNI</div>
<div class="t" style="left:600.00px;top:214px;font-size:9px;line-height:9px;color:#000;transform:scaleX(0.9450);">CVUTSCHO</div>
<div class="t" style="left:600.00px;top:227px;font-size:9px;line-height:9px;color:#000;transform:scaleX(0.9450);">CVUTSOLA</div>
<div class="t" style="left:600.00px;top:240px;font-size:9px;line-height:9px;color:#000;transform:scaleX(0.9450);">CVUTTEST</div>
<div class="t" style="left:600.00px;top:254px;font-size:9px;line-height:9px;color:#000;transform:scaleX(0.9450);">EIS</div>
<div class="t" style="left:600.00px;top:268px;font-size:9px;line-height:9px;color:#000;transform:scaleX(0.9450);">FISTEST</div>
<div class="t" style="left:600.00px;top:281px;font-size:9px;line-height:9px;color:#000;transform:scaleX(0.9450);">FIS_01</div>
<div class="t" style="left:600.00px;top:294px;font-size:9px;line-height:9px;color:#000;transform:scaleX(0.9450);">JDAN</div>
<div class="t" style="left:600.00px;top:308px;font-size:9px;line-height:9px;color:#000;transform:scaleX(0.9450);">MMED</div>
<div class="t" style="left:600.00px;top:322px;font-size:9px;line-height:9px;color:#000;transform:scaleX(0.9450);">ROLE_SPRAVCE_FIS</div>
<div class="t" style="left:600.00px;top:335px;font-size:9px;line-height:9px;color:#000;transform:scaleX(0.9450);">ROLE_UCETNI</div>
<div class="t" style="left:600.00px;top:348px;font-size:9px;line-height:9px;color:#000;transform:scaleX(0.9450);">ROLE_UCETNI_CVUT</div>
<div class="t" style="left:600.00px;top:362px;font-size:9px;line-height:9px;color:#000;transform:scaleX(0.9450);">ROLE_UCETNI_HLAVNI</div>
<div class="t" style="left:600.00px;top:376px;font-size:9px;line-height:9px;color:#000;transform:scaleX(0.9450);">ROLE_ZAKAZKY_PROHLIZENI</div>
<div class="t" style="left:600.00px;top:389px;font-size:9px;line-height:9px;color:#000;transform:scaleX(0.9450);">TESTMATO</div>
<svg class="b" style="left:0;top:0" width="800" height="120" viewBox="0 0 800 120"><path d="M517.5 88.5 V101.5 L520.5 98.5 L522.8 102.8 L524.8 101.8 L522.6 97.5 H527 Z" fill="#fff" stroke="#000" stroke-width="1.1" stroke-linejoin="round"/></svg>
<div class="b" style="left:2px;top:547px;width:796px;height:31px;background:#666666;border:1px solid #8898b0;border-top-color:#2a3448;border-left-color:#2a3448;border-radius:8px;box-sizing:border-box"></div>
<div class="b" style="left:8px;top:562px;width:783px;height:1px;background:#1e2838"></div>
<div class="t" style="left:9.00px;top:550px;font-size:11px;line-height:11px;color:#ffffff;transform:scaleX(0.8772);-webkit-text-stroke:0.25px #fff;">Objekt, kterému se přidělují přístupová práva</div>
<div class="t" style="left:8.00px;top:564px;font-size:11px;line-height:11px;color:#ffffff;transform:scaleX(0.8342);-webkit-text-stroke:0.25px #fff;">Záznam: 1/1</div>
<div class="b" style="left:111px;top:563px;width:1px;height:13px;background:#24304a"></div>
<div class="b" style="left:133px;top:563px;width:1px;height:13px;background:#24304a"></div>
<div class="b" style="left:197px;top:563px;width:1px;height:13px;background:#24304a"></div>
<div class="b" style="left:276px;top:563px;width:1px;height:13px;background:#24304a"></div>
<div class="b" style="left:320px;top:563px;width:1px;height:13px;background:#24304a"></div>
<div class="b" style="left:786px;top:549px;width:1px;height:13px;background:#24304a"></div>
<div class="t" style="left:182.00px;top:564px;font-size:11px;line-height:11px;color:#ffffff;transform:scaleX(0.7635);-webkit-text-stroke:0.25px #fff;">...</div>
<div class="t" style="left:202.00px;top:564px;font-size:11px;line-height:11px;color:#ffffff;transform:scaleX(0.8904);-webkit-text-stroke:0.25px #fff;">Seznam hodn...</div>
<div class="t" style="left:327.00px;top:564px;font-size:11px;line-height:11px;color:#ffffff;transform:scaleX(0.8450);-webkit-text-stroke:0.25px #fff;">&lt;OSC&gt;</div>
</body></html>
